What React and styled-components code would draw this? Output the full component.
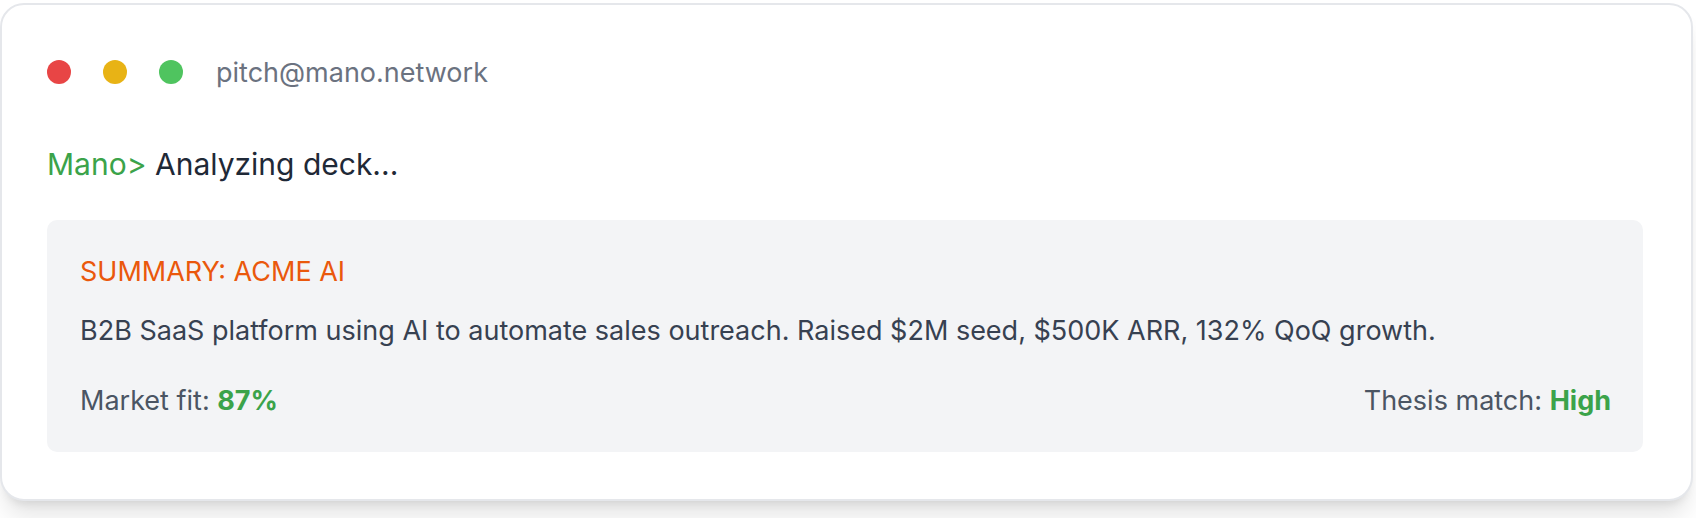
import React from 'react';
import styled, { createGlobalStyle } from 'styled-components';

const GlobalStyle = createGlobalStyle`
    html, body {
        margin: 0;
        padding: 0;
        background: #ffffff;
    }
    body {
        font-family: Inter, "Noto Sans", "Liberation Sans", sans-serif;
        -webkit-font-smoothing: antialiased;
    }
`;

const Page = styled.div`
    padding: 3px 3px 18px 0;
`;

const Window = styled.div`
    background: #ffffff;
    border: 2px solid #e5e7eb;
    border-radius: 24px;
    box-shadow: 0 20px 25px -5px rgba(0, 0, 0, 0.1), 0 8px 10px -6px rgba(0, 0, 0, 0.1);
    padding: 48px 48px 47px 45px;
`;

const TitleBar = styled.div`
    display: flex;
    align-items: center;
    height: 38px;
`;

const Dot = styled.span`
    width: 24px;
    height: 24px;
    border-radius: 50%;
    background: ${p => p.color};
    margin-right: 32px;
    flex-shrink: 0;
`;

const Address = styled.span`
    font-size: 27px;
    color: #6b7280;
    margin-left: 1px;
`;

const Prompt = styled.p`
    margin: 54px 0 36px;
    font-size: 30px;
    line-height: 39px;
    color: #1f2937;
`;

const Agent = styled.span`
    color: #3ba34a;
`;

const Summary = styled.div`
    background: #f3f4f6;
    border-radius: 10px;
    padding: 32px 32px 32px 33px;
`;

const Heading = styled.h3`
    margin: 0 0 20px;
    font-size: 27px;
    line-height: 39px;
    font-weight: 400;
    color: #ea580c;
`;

const Body = styled.p`
    margin: 0 0 31px;
    font-size: 27px;
    line-height: 39px;
    color: #374151;
`;

const Stats = styled.div`
    display: flex;
    justify-content: space-between;
    font-size: 27px;
    line-height: 39px;
    color: #4b5563;
`;

const Value = styled.strong`
    color: #3ba34a;
    font-weight: 700;
`;

export default function App() {
    return (
        <Page>
            <GlobalStyle />
            <Window>
                <TitleBar>
                    <Dot color="#e84545" />
                    <Dot color="#e8b315" />
                    <Dot color="#4fc45f" />
                    <Address>pitch@mano.network</Address>
                </TitleBar>

                <Prompt>
                    <Agent>Mano&gt;</Agent> Analyzing deck...
                </Prompt>

                <Summary>
                    <Heading>SUMMARY: ACME AI</Heading>
                    <Body>
                        B2B SaaS platform using AI to automate sales outreach. Raised $2M seed, $500K ARR, 132% QoQ growth.
                    </Body>
                    <Stats>
                        <span>Market fit: <Value>87%</Value></span>
                        <span>Thesis match: <Value>High</Value></span>
                    </Stats>
                </Summary>
            </Window>
        </Page>
    );
}
